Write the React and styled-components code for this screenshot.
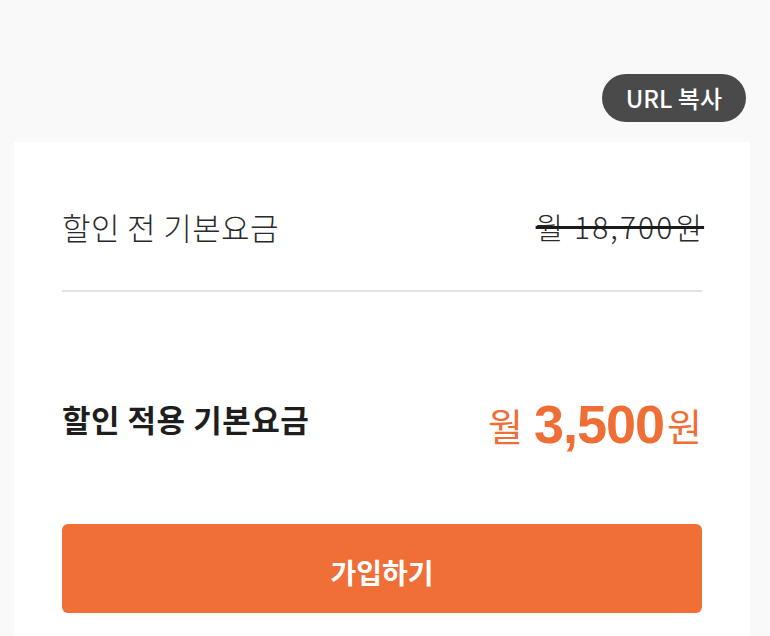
import React from "react";
import styled, { createGlobalStyle } from "styled-components";

const Global = createGlobalStyle`
  html, body { margin: 0; padding: 0; background: #f9f9f9; }
  body { font-family: "Noto Sans CJK KR", "Noto Sans", sans-serif; color: #222; }
`;

const Page = styled.div`
  width: 770px;
  height: 636px;
  overflow: hidden;
  display: flex;
  flex-direction: column;
  background: #f9f9f9;
`;

const TopBar = styled.div`
  display: flex;
  justify-content: flex-end;
  padding: 74px 24px 20px 0;
`;

const CopyButton = styled.button`
  height: 48px;
  padding: 0 24px;
  border: none;
  border-radius: 24px;
  background: #4a4a4a;
  color: #fff;
  font-family: "Noto Sans CJK KR", sans-serif;
  font-size: 24px;
  font-weight: 500;
  line-height: 48px;
`;

const Card = styled.section`
  margin: 0 20px 0 14px;
  background: #fff;
  padding: 0 48px;
  flex: 1;
  display: flex;
  flex-direction: column;
`;

const Row = styled.div`
  display: flex;
  justify-content: space-between;
  align-items: center;
  box-sizing: border-box;
  height: ${(p) => p.$h}px;
  padding-top: ${(p) => p.$pt}px;
  border-bottom: ${(p) => (p.$divider ? "2px solid #e3e3e3" : "none")};
  flex-shrink: 0;
`;

const Label = styled.span`
  font-size: 31px;
  font-weight: ${(p) => (p.$bold ? 700 : 300)};
  color: ${(p) => (p.$bold ? "#1e1e1e" : "#2a2a2a")};
  letter-spacing: ${(p) => (p.$bold ? 0.5 : 0.4)}px;
  line-height: 45px;
`;

const OldPrice = styled.span`
  font-size: 30px;
  font-weight: 300;
  color: #2a2a2a;
  letter-spacing: 2.1px;
  margin-right: -2.1px;
  line-height: 45px;
  text-decoration: line-through;
  text-decoration-thickness: 3px;
  text-decoration-color: #1a1a1a;
`;

const Price = styled.span`
  color: #ef6e36;
  display: flex;
  align-items: baseline;
  padding-top: 12px;
`;

const Unit = styled.span`
  font-size: 38px;
  font-weight: 400;
  position: relative;
  top: -2px;
`;

const Amount = styled.span`
  font-family: "Liberation Sans", Arial, sans-serif;
  font-size: 54px;
  font-weight: 700;
  letter-spacing: -1px;
  margin: 0 3px 0 11px;
`;

const JoinButton = styled.button`
  height: 89px;
  padding-top: 7px;
  border: none;
  border-radius: 6px;
  background: #ef6f37;
  color: #fff;
  font-family: "Noto Sans CJK KR", sans-serif;
  font-size: 28px;
  font-weight: 700;
  flex-shrink: 0;
`;

export default function App() {
  return (
    <Page>
      <Global />
      <TopBar>
        <CopyButton>URL 복사</CopyButton>
      </TopBar>
      <Card>
        <Row $h={150} $pt={20} $divider>
          <Label>할인 전 기본요금</Label>
          <OldPrice>월 18,700원</OldPrice>
        </Row>
        <Row $h={232} $pt={20}>
          <Label $bold>할인 적용 기본요금</Label>
          <Price>
            <Unit>월</Unit>
            <Amount>3,500</Amount>
            <Unit>원</Unit>
          </Price>
        </Row>
        <JoinButton>가입하기</JoinButton>
      </Card>
    </Page>
  );
}
